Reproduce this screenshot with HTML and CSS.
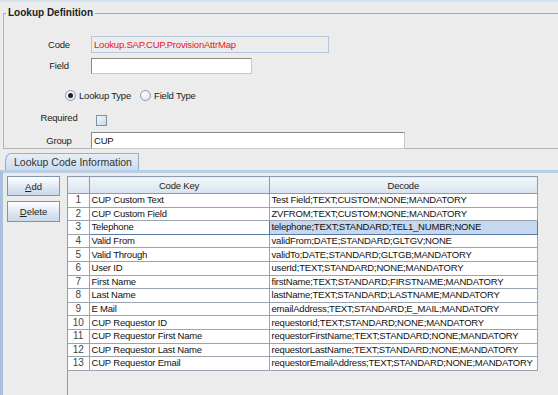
FILE: index.html
```html
<!DOCTYPE html>
<html lang="en">
<head>
  <meta charset="UTF-8" />
  <title>Lookup Definition</title>
  <link rel="stylesheet" href="styles.css">
</head>
<body>

<div class="top-strip"></div>

<fieldset class="definition">
  <legend>Lookup Definition</legend>

  <div class="form">
    <label class="lbl">Code</label>
    <div class="code-field">Lookup.SAP.CUP.ProvisionAttrMap</div>

    <label class="lbl">Field</label>
    <div><input class="text field-input" type="text"></div>

    <div></div>
    <div class="radios">
      <span class="radio checked"></span><span class="radio-text">Lookup Type</span>
      <span class="radio"></span><span class="radio-text">Field Type</span>
    </div>

    <label class="lbl lbl-req">Required</label>
    <div><span class="check"></span></div>

    <label class="lbl">Group</label>
    <div><input class="text group-input" type="text" value="CUP"></div>
  </div>
</fieldset>

<div class="tabs">
  <div class="tab">Lookup Code Information</div>
</div>

<div class="tab-body">
  <div class="actions">
    <button class="btn"><u>A</u>dd</button>
    <button class="btn"><u>D</u>elete</button>
  </div>

  <div class="grid-view">
    <table class="codes">
      <thead>
        <tr><th class="num"></th><th class="key">Code Key</th><th class="dec">Decode</th></tr>
      </thead>
      <tbody>
        <tr><td class="num">1</td><td>CUP Custom Text</td><td>Test Field;TEXT;CUSTOM;NONE;MANDATORY</td></tr>
        <tr><td class="num">2</td><td>CUP Custom Field</td><td>ZVFROM;TEXT;CUSTOM;NONE;MANDATORY</td></tr>
        <tr class="selected"><td class="num">3</td><td class="focus">Telephone</td><td class="hl">telephone;TEXT;STANDARD;TEL1_NUMBR;NONE</td></tr>
        <tr><td class="num">4</td><td>Valid From</td><td>validFrom;DATE;STANDARD;GLTGV;NONE</td></tr>
        <tr><td class="num">5</td><td>Valid Through</td><td>validTo;DATE;STANDARD;GLTGB;MANDATORY</td></tr>
        <tr><td class="num">6</td><td>User ID</td><td>userId;TEXT;STANDARD;NONE;MANDATORY</td></tr>
        <tr><td class="num">7</td><td>First Name</td><td>firstName;TEXT;STANDARD;FIRSTNAME;MANDATORY</td></tr>
        <tr><td class="num">8</td><td>Last Name</td><td>lastName;TEXT;STANDARD;LASTNAME;MANDATORY</td></tr>
        <tr><td class="num">9</td><td>E Mail</td><td>emailAddress;TEXT;STANDARD;E_MAIL;MANDATORY</td></tr>
        <tr><td class="num">10</td><td>CUP Requestor ID</td><td>requestorId;TEXT;STANDARD;NONE;MANDATORY</td></tr>
        <tr><td class="num">11</td><td>CUP Requestor First Name</td><td>requestorFirstName;TEXT;STANDARD;NONE;MANDATORY</td></tr>
        <tr><td class="num">12</td><td>CUP Requestor Last Name</td><td>requestorLastName;TEXT;STANDARD;NONE;MANDATORY</td></tr>
        <tr><td class="num">13</td><td>CUP Requestor Email</td><td>requestorEmailAddress;TEXT;STANDARD;NONE;MANDATORY</td></tr>
      </tbody>
    </table>
  </div>
</div>

</body>
</html>
```

FILE: styles.css
```css
* {
  box-sizing: border-box;
}

html, body {
  height: 100%;
}

body {
  margin: 0;
  overflow: hidden;
  background: #ececec;
  font-family: 'Liberation Sans', Arial, sans-serif;
  font-size: 9.5px;
  letter-spacing: -0.2px;
  color: #222;
  display: flex;
  flex-direction: column;
}

.top-strip {
  height: 2px;
  background: #d4e2ef;
}

/* ---- Lookup Definition ---- */

.definition {
  margin: 4px -20px 0 3px;
  padding: 0;
  height: 143px;
  border: 1px solid #b4b4b4;
  border-top-color: #a8a8a8;
}

.definition legend {
  margin-left: 2px;
  padding: 0 2px;
  font-size: 10px;
  font-weight: bold;
  letter-spacing: 0;
  color: #222;
  line-height: 14px;
}

.form {
  display: grid;
  grid-template-columns: 56px auto;
  column-gap: 4px;
  margin-left: 27px;
  margin-top: 16px;
}

.lbl {
  text-align: center;
  color: #222;
  line-height: 17px;
}

.code-field {
  width: 238px;
  height: 17px;
  border: 1px solid #b6c6de;
  color: #e8141c;
  padding: 1px 2px;
  line-height: 14px;
}

.text {
  display: block;
  height: 16px;
  margin: 0;
  padding: 0 2px;
  border: 1px solid #8a8a8a;
  border-right-color: #c8c8c8;
  border-bottom-color: #c8c8c8;
  background: #fff;
  font-family: inherit;
  font-size: 9.5px;
  letter-spacing: -0.2px;
  color: #111;
  outline: none;
}

.field-input {
  width: 161px;
  margin-top: 5px;
}

.form .lbl:nth-child(3) {
  margin-top: 4px;
}

.radios {
  display: flex;
  align-items: center;
  height: 14px;
  margin: 14px 0 0 -26px;
}

.radio {
  width: 11px;
  height: 11px;
  border-radius: 50%;
  border: 1px solid #8b9ab0;
  background: radial-gradient(circle at 35% 35%, #ffffff, #d5dfeb);
  position: relative;
}

.radio.checked::after {
  content: "";
  position: absolute;
  left: 2px;
  top: 2px;
  width: 5px;
  height: 5px;
  border-radius: 50%;
  background: #222;
}

.radio-text {
  margin: 0 9px 0 3px;
}

.lbl-req {
  margin-top: 9px;
  margin-left: -20px;
  margin-right: -20px;
  line-height: 14px;
}

.check {
  display: block;
  width: 11px;
  height: 11px;
  margin: 13px 0 0 5px;
  border: 1px solid #7d8ea5;
  background: linear-gradient(135deg, #f4f7fb, #c8d6e8);
}

.form .lbl:nth-last-child(2) {
  margin-top: 6px;
}

.group-input {
  width: 314px;
  height: 17px;
  margin-top: 6px;
}

/* ---- Tab ---- */

.tabs {
  display: flex;
  margin-top: 4px;
  padding-left: 5px;
}

.tab {
  width: 134px;
  height: 18px;
  padding: 0 0 0 8px;
  border: 1px solid #98aec8;
  border-bottom: none;
  border-top-left-radius: 6px 8px;
  background: linear-gradient(#e6eff8, #c9daed);
  font-size: 10.5px;
  letter-spacing: 0;
  line-height: 17px;
  color: #333;
}

.tab-body {
  flex: 1;
  display: flex;
  gap: 7px;
  padding: 3px 0 0 4px;
  border-top: 3px solid #b8cde6;
  border-left: 3px solid #a9c0de;
  margin-top: -1px;
}

.actions {
  display: flex;
  flex-direction: column;
  gap: 5px;
}

.btn {
  width: 53px;
  height: 20px;
  margin: 0;
  padding: 0;
  border: 1px solid #8194ad;
  background: linear-gradient(#ffffff, #dbe6f2 60%, #c9d8ea);
  font-family: inherit;
  font-size: 9.5px;
  color: #222;
}

.btn + .btn {
  height: 21px;
}

.grid-view {
  width: 471px;
  border-left: 1px solid #8d9bb0;
}

/* ---- Table ---- */

.codes {
  border-collapse: collapse;
  table-layout: fixed;
  width: 470px;
}

.codes th {
  height: 17px;
  padding: 0;
  border: 1px solid #8d9bb0;
  border-left: none;
  background: linear-gradient(#f2f6fa, #d8e3ef);
  font-weight: normal;
  color: #222;
}

.codes th.num {
  width: 21px;
}

.codes th.key {
  width: 180px;
}

.codes td {
  height: 13.6px;
  padding: 0 0 0 2px;
  border: 1px solid #9aa3b0;
  border-left: none;
  background: #fff;
  line-height: 12px;
  white-space: nowrap;
  overflow: hidden;
  color: #111;
}

.codes td.num {
  text-align: center;
  padding: 0;
  font-size: 10px;
  letter-spacing: 0;
  color: #444;
}

.codes td.focus {
  border: 1px solid #5a78a6;
}

.codes td.hl {
  background: #c6d8ee;
  border-color: #5a78a6;
}
```
